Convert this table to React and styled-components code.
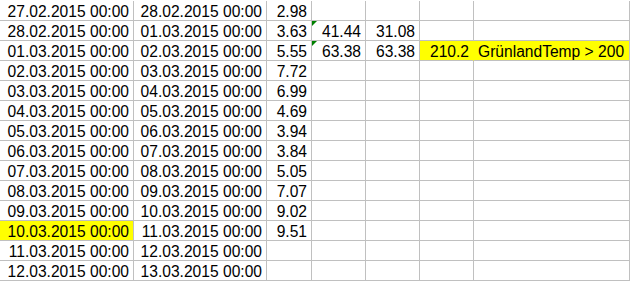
import React from 'react';
import styled, { createGlobalStyle } from 'styled-components';

const GlobalStyle = createGlobalStyle`
  html, body {
    margin: 0;
    padding: 0;
    background: #ffffff;
  }
  body {
    font-family: "Liberation Sans", Arial, sans-serif;
  }
`;

// column widths including the 1px right grid line
const widths = [134, 133, 45, 54, 54, 54, 156];

const rows = [
  { from: '27.02.2015 00:00', to: '28.02.2015 00:00', v: '2.98' },
  { from: '28.02.2015 00:00', to: '01.03.2015 00:00', v: '3.63', a: '41.44', b: '31.08', flag: true },
  { from: '01.03.2015 00:00', to: '02.03.2015 00:00', v: '5.55', a: '63.38', b: '63.38', flag: true, sum: '210.2', note: 'GrünlandTemp > 200' },
  { from: '02.03.2015 00:00', to: '03.03.2015 00:00', v: '7.72' },
  { from: '03.03.2015 00:00', to: '04.03.2015 00:00', v: '6.99' },
  { from: '04.03.2015 00:00', to: '05.03.2015 00:00', v: '4.69' },
  { from: '05.03.2015 00:00', to: '06.03.2015 00:00', v: '3.94' },
  { from: '06.03.2015 00:00', to: '07.03.2015 00:00', v: '3.84' },
  { from: '07.03.2015 00:00', to: '08.03.2015 00:00', v: '5.05' },
  { from: '08.03.2015 00:00', to: '09.03.2015 00:00', v: '7.07' },
  { from: '09.03.2015 00:00', to: '10.03.2015 00:00', v: '9.02' },
  { from: '10.03.2015 00:00', to: '11.03.2015 00:00', v: '9.51', mark: true },
  { from: '11.03.2015 00:00', to: '12.03.2015 00:00' },
  { from: '12.03.2015 00:00', to: '13.03.2015 00:00' },
];

const Sheet = styled.div`
  padding-top: 1px;
  width: 630px;
`;

const Row = styled.div`
  display: grid;
  grid-template-columns: ${widths.map((w) => `${w}px`).join(' ')};
  height: 20px;
`;

const Cell = styled.div`
  position: relative;
  box-sizing: border-box;
  height: 20px;
  border-right: 1px solid ${(p) => (p.$joined ? '#ffff00' : '#c0c0c0')};
  border-bottom: 1px solid #c0c0c0;
  background: ${(p) => (p.$hl ? '#ffff00' : '#ffffff')};
  color: #000000;
  font-size: 15.6px;
  line-height: 21px;
  white-space: nowrap;
  text-align: ${(p) => (p.$text ? 'left' : 'right')};
  padding: ${(p) => (p.$text ? '0 0 0 4px' : '0 4px 0 0')};
`;

const Flag = styled.span`
  position: absolute;
  top: 0;
  left: 0;
  width: 0;
  height: 0;
  border-top: 5px solid #008000;
  border-right: 5px solid transparent;
`;

export default function App() {
  return (
    <>
      <GlobalStyle />
      <Sheet>
        {rows.map((r, i) => (
          <Row key={i}>
            <Cell $hl={r.mark}>{r.from}</Cell>
            <Cell>{r.to}</Cell>
            <Cell>{r.v}</Cell>
            <Cell>
              {r.flag && <Flag />}
              {r.a}
            </Cell>
            <Cell>{r.b}</Cell>
            <Cell $hl={!!r.sum} $joined={!!r.sum}>{r.sum}</Cell>
            <Cell $hl={!!r.note} $text>{r.note}</Cell>
          </Row>
        ))}
      </Sheet>
    </>
  );
}
